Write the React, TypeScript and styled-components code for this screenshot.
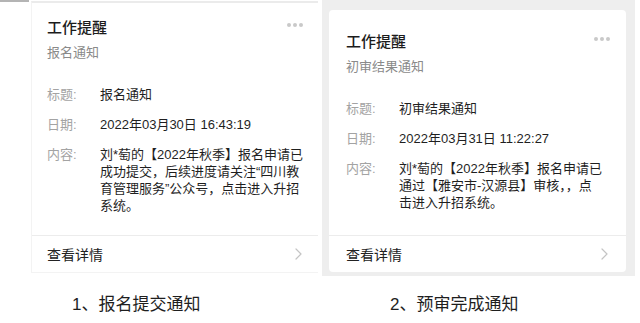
import styled, { createGlobalStyle } from "styled-components";

// Types -------------------------------------------------------------------------

interface Notice {
  subtitle: string;
  title: string;
  date: string;
  content: string[];
  caption: string;
}

const notices: Notice[] = [
  {
    subtitle: "报名通知",
    title: "报名通知",
    date: "2022年03月30日 16:43:19",
    content: [
      "刘*萄的【2022年秋季】报名申请已",
      "成功提交，后续进度请关注“四川教",
      "育管理服务”公众号，点击进入升招",
      "系统。",
    ],
    caption: "1、报名提交通知",
  },
  {
    subtitle: "初审结果通知",
    title: "初审结果通知",
    date: "2022年03月31日 11:22:27",
    content: [
      "刘*萄的【2022年秋季】报名申请已",
      "通过【雅安市-汉源县】审核，，点",
      "击进入升招系统。",
    ],
    caption: "2、预审完成通知",
  },
];

// Component ---------------------------------------------------------------------

const Chevron = () => (
  <svg width="7" height="12" viewBox="0 0 7 12">
    <polyline
      points="1,1 6,6 1,11"
      fill="none"
      stroke="#c4c4c4"
      strokeWidth="1.2"
      strokeLinecap="round"
      strokeLinejoin="round"
    />
  </svg>
);

const NoticeCard = ({ notice, framed }: { notice: Notice; framed: boolean }) => (
  <Card $framed={framed}>
    <Header $framed={framed}>
      <HeadText>
        <Title>工作提醒</Title>
        <Subtitle>{notice.subtitle}</Subtitle>
      </HeadText>
      <Dots>
        <Dot />
        <Dot />
        <Dot />
      </Dots>
    </Header>
    <Body $framed={framed}>
      <Row>
        <Label>标题:</Label>
        <Value>{notice.title}</Value>
      </Row>
      <Row>
        <Label>日期:</Label>
        <Value>{notice.date}</Value>
      </Row>
      <Row>
        <Label>内容:</Label>
        <Value>
          {notice.content.map((line) => (
            <Line key={line}>{line}</Line>
          ))}
        </Value>
      </Row>
    </Body>
    <Footer $framed={framed}>
      <span>查看详情</span>
      <Chevron />
    </Footer>
  </Card>
);

export default function App() {
  return (
    <>
      <GlobalStyle />
      <Page>
        <Gutter />
        <Column $w={287} $ml={2}>
          <Frame $gray={false}>
            <NoticeCard notice={notices[0]} framed={false} />
          </Frame>
          <Caption $mt={20} $pl={41}>
            {notices[0].caption}
          </Caption>
        </Column>
        <Column $w={313} $ml={4}>
          <Frame $gray>
            <NoticeCard notice={notices[1]} framed />
          </Frame>
          <Caption $mt={17} $pl={68}>
            {notices[1].caption}
          </Caption>
        </Column>
      </Page>
    </>
  );
}

// Styled ------------------------------------------------------------------------

const GlobalStyle = createGlobalStyle`
  html, body {
    margin: 0;
    padding: 0;
    background: #ffffff;
  }
  body {
    font-family: "Liberation Sans", "Noto Sans CJK SC", sans-serif;
    color: #222222;
  }
`;

const Page = styled.div`
  display: flex;
  align-items: flex-start;
  width: 640px;
  height: 323px;
  overflow: hidden;
`;

const Gutter = styled.div`
  flex: none;
  width: 29px;
  height: 2px;
  background: #b4b4b4;
`;

const Column = styled.div<{ $w: number; $ml: number }>`
  flex: none;
  display: flex;
  flex-direction: column;
  width: ${({ $w }) => $w}px;
  margin-left: ${({ $ml }) => $ml}px;
`;

const Frame = styled.div<{ $gray: boolean }>`
  background: ${({ $gray }) => ($gray ? "#eeeeee" : "transparent")};
  padding: ${({ $gray }) => ($gray ? "10px 9px 4px 7px" : "1px 0 0 0")};
`;

const Card = styled.div<{ $framed: boolean }>`
  display: flex;
  flex-direction: column;
  box-sizing: border-box;
  height: ${({ $framed }) => ($framed ? 262 : 272)}px;
  background: #ffffff;
  border-radius: ${({ $framed }) => ($framed ? "4px" : "0")};
  border-top: ${({ $framed }) => ($framed ? "none" : "2px solid #ebebeb")};
  border-left: ${({ $framed }) => ($framed ? "none" : "1px solid #f3f3f3")};
  border-bottom: ${({ $framed }) => ($framed ? "none" : "1px solid #f3f3f3")};
`;

const Header = styled.div<{ $framed: boolean }>`
  display: flex;
  justify-content: space-between;
  align-items: flex-start;
  padding: ${({ $framed }) => ($framed ? "21px 16px 0 17px" : "14px 15px 0 15px")};
`;

const HeadText = styled.div`
  display: flex;
  flex-direction: column;
  gap: 5px;
`;

const Title = styled.div`
  font-size: 15px;
  line-height: 22px;
  font-weight: 500;
  color: #1c1c1c;
`;

const Subtitle = styled.div`
  font-size: 13px;
  line-height: 18px;
  color: #8a8a8a;
`;

const Dots = styled.div`
  display: flex;
  gap: 2px;
  margin-top: 6px;
`;

const Dot = styled.span`
  width: 4px;
  height: 4px;
  border-radius: 50%;
  background: #c9c9c9;
`;

const Body = styled.div<{ $framed: boolean }>`
  flex: 1;
  display: flex;
  flex-direction: column;
  gap: 13px;
  padding: ${({ $framed }) => ($framed ? "24px 0 0 17px" : "24px 0 0 15px")};
`;

const Row = styled.div`
  display: flex;
  font-size: 13px;
  line-height: 17px;
`;

const Label = styled.div`
  flex: none;
  width: 53px;
  color: #a3a3a3;
`;

const Value = styled.div`
  color: #1f1f1f;
  white-space: nowrap;
`;

const Line = styled.div``;

const Footer = styled.div<{ $framed: boolean }>`
  display: flex;
  justify-content: space-between;
  align-items: center;
  height: 37px;
  flex: none;
  box-sizing: border-box;
  border-top: 1px solid #ececec;
  padding: ${({ $framed }) => ($framed ? "0 18px 0 17px" : "0 16px 0 15px")};
  font-size: 14px;
  color: #222222;
`;

const Caption = styled.div<{ $mt: number; $pl: number }>`
  margin-top: ${({ $mt }) => $mt}px;
  padding-left: ${({ $pl }) => $pl}px;
  font-size: 17px;
  line-height: 24px;
  color: #1e1e1e;
`;
